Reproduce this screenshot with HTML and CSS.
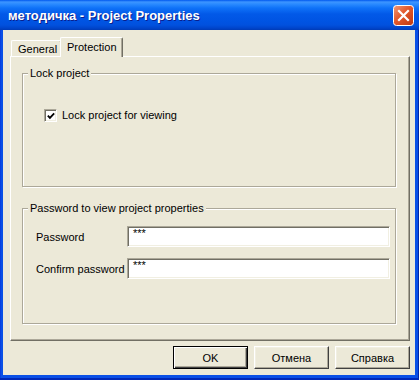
FILE: index.html
```html
<!DOCTYPE html>
<html lang="en">
<head>
    <meta charset="UTF-8">
    <title>методичка - Project Properties</title>
    <link rel="stylesheet" href="styles.css">
</head>
<body>
    <div class="window">
        <div class="titlebar">
            <span class="title">методичка - Project Properties</span>
            <button class="close-btn" title="Close">
                <svg width="21" height="21" viewBox="0 0 21 21">
                    <defs>
                        <linearGradient id="closeGrad" x1="0" y1="0" x2="1" y2="1">
                            <stop offset="0" stop-color="#F29B78"/>
                            <stop offset="0.45" stop-color="#E2582C"/>
                            <stop offset="1" stop-color="#C0380F"/>
                        </linearGradient>
                    </defs>
                    <rect x="0.5" y="0.5" width="20" height="20" rx="3" fill="url(#closeGrad)" stroke="#fff"/>
                    <path d="M6 6 L15 15 M15 6 L6 15" stroke="#fff" stroke-width="2.2" stroke-linecap="square"/>
                </svg>
            </button>
        </div>

        <div class="frame">
            <div class="client">
                <!-- Tabs -->
                <div class="tabs">
                    <div class="tab">General</div>
                    <div class="tab active">Protection</div>
                </div>

                <div class="tab-panel">
                    <fieldset class="group group-lock">
                        <legend>Lock project</legend>
                        <div class="group-body">
                            <label class="check-row">
                                <span class="checkbox">
                                    <svg width="11" height="11" viewBox="0 0 11 11">
                                        <path d="M2 4.5 L4.3 7 L9 2" fill="none" stroke="#000" stroke-width="2"/>
                                    </svg>
                                </span>
                                Lock project for viewing
                            </label>
                        </div>
                    </fieldset>

                    <fieldset class="group group-password">
                        <legend>Password to view project properties</legend>
                        <div class="group-body">
                            <div class="field-row">
                                <label>Password</label>
                                <div class="text-box">***</div>
                            </div>
                            <div class="field-row">
                                <label>Confirm password</label>
                                <div class="text-box">***</div>
                            </div>
                        </div>
                    </fieldset>
                </div>

                <!-- Dialog buttons -->
                <div class="dialog-buttons">
                    <button class="btn btn-default">OK</button>
                    <button class="btn">Отмена</button>
                    <button class="btn">Справка</button>
                </div>
            </div>
        </div>
    </div>
</body>
</html>
```

FILE: styles.css
```css
:root {
    --face: #ECE9D8;
    --shadow: #ACA899;
    --dark-shadow: #716F64;
    --light: #F1EFE2;
}

body {
    margin: 0;
    font-family: 'Liberation Sans', Arial, sans-serif;
    font-size: 11px;
    color: #000;
}

.window {
    width: 419px;
    height: 380px;
    display: flex;
    flex-direction: column;
    background: #0A46DC;
}

.titlebar {
    height: 30px;
    flex: none;
    display: flex;
    align-items: center;
    justify-content: space-between;
    padding: 1px 5px 0 8px;
    box-sizing: border-box;
    background: linear-gradient(to bottom,
        #0058EE 0px, #3D95FF 2px, #2B8BFF 4px, #0F72F8 8px,
        #0259E8 14px, #0054E3 21px, #0151DE 25px, #0045CC 28px, #003BB6 30px);
}

.title {
    color: #fff;
    font-weight: bold;
    font-size: 13px;
    text-shadow: 1px 1px 0 #0A1E8C;
}

.close-btn {
    width: 21px;
    height: 21px;
    padding: 0;
    border: none;
    background: none;
    display: block;
}

.close-btn svg {
    display: block;
}

.frame {
    flex: 1;
    padding: 0 4px 5px 3px;
    background: linear-gradient(to right, #0831D9 0px, #0A50E6 1px, #0A50E6 100%);
    box-shadow: inset 0 -2px 0 #0028B8, inset -1px 0 0 #0026A8;
    display: flex;
}

.client {
    flex: 1;
    background: var(--face);
    padding: 7px 5px 0 7px;
    display: flex;
    flex-direction: column;
}

/* Tabs */
.tabs {
    display: flex;
    align-items: flex-end;
    height: 20px;
    padding-left: 1px;
    position: relative;
}

.tab {
    box-sizing: border-box;
    height: 17px;
    width: 51px;
    padding: 2px 0 0 6px;
    line-height: 13px;
    border: 1px solid;
    border-bottom: none;
    border-color: #fff var(--dark-shadow) #fff #fff;
    border-radius: 2px 2px 0 0;
    box-shadow: inset -1px 0 0 var(--shadow);
    background: var(--face);
}

.tab.active {
    height: 20px;
    width: 63px;
    margin-left: -2px;
    padding-top: 3px;
    position: relative;
    z-index: 2;
}

.tab-panel {
    position: relative;
    z-index: 1;
    margin-top: -1px;
    width: 400px;
    height: 285px;
    box-sizing: border-box;
    background: var(--face);
    border: 1px solid;
    border-color: #fff var(--dark-shadow) var(--dark-shadow) #fff;
    box-shadow: inset -1px -1px 0 var(--shadow);
    padding: 10px 0 0 11px;
}

/* Group boxes */
.group {
    margin: 0;
    padding: 0;
    min-width: 0;
    width: 374px;
    box-sizing: border-box;
    border: 1px solid #D0D0BF;
    border-color: var(--shadow);
    box-shadow: inset 1px 1px 0 #fff, 1px 1px 0 #fff;
}

.group legend {
    margin-left: 5px;
    padding: 0 2px;
    line-height: 13px;
    background: var(--face);
}

.group-lock .group-body {
    padding: 29px 0 64px 21px;
}

.group-password {
    margin-top: 15px;
}

.group-password .group-body {
    padding: 11px 0 44px 13px;
    display: flex;
    flex-direction: column;
    gap: 11px;
}

.check-row {
    display: flex;
    align-items: center;
    gap: 5px;
    line-height: 13px;
}

.checkbox {
    width: 13px;
    height: 13px;
    box-sizing: border-box;
    border: 1px solid;
    border-color: var(--shadow) #fff #fff var(--shadow);
    box-shadow: inset 1px 1px 0 var(--dark-shadow), inset -1px -1px 0 var(--light);
    background: #fff;
    display: flex;
    align-items: center;
    justify-content: center;
}

.checkbox svg {
    display: block;
    margin: 1px 0 0 1px;
}

.field-row {
    display: grid;
    grid-template-columns: 91px 263px;
    align-items: center;
}

.text-box {
    height: 21px;
    box-sizing: border-box;
    background: #fff;
    border: 1px solid;
    border-color: var(--shadow) #fff #fff var(--shadow);
    box-shadow: inset 1px 1px 0 var(--dark-shadow), inset -1px -1px 0 var(--light);
    padding: 0 5px;
    line-height: 13px;
}

/* Buttons */
.dialog-buttons {
    display: flex;
    justify-content: flex-end;
    gap: 6px;
    margin-top: 5px;
    width: 400px;
}

.btn {
    width: 75px;
    height: 23px;
    padding: 0;
    font-family: inherit;
    font-size: 11px;
    color: #000;
    background: var(--face);
    border: 1px solid;
    border-color: #fff #404040 #404040 #fff;
    box-shadow: inset -1px -1px 0 var(--shadow), inset 1px 1px 0 var(--light);
}

.btn-default {
    border-color: #000;
    box-shadow: inset 1px 1px 0 #fff, inset -1px -1px 0 #404040, inset -2px -2px 0 var(--shadow);
}
```
